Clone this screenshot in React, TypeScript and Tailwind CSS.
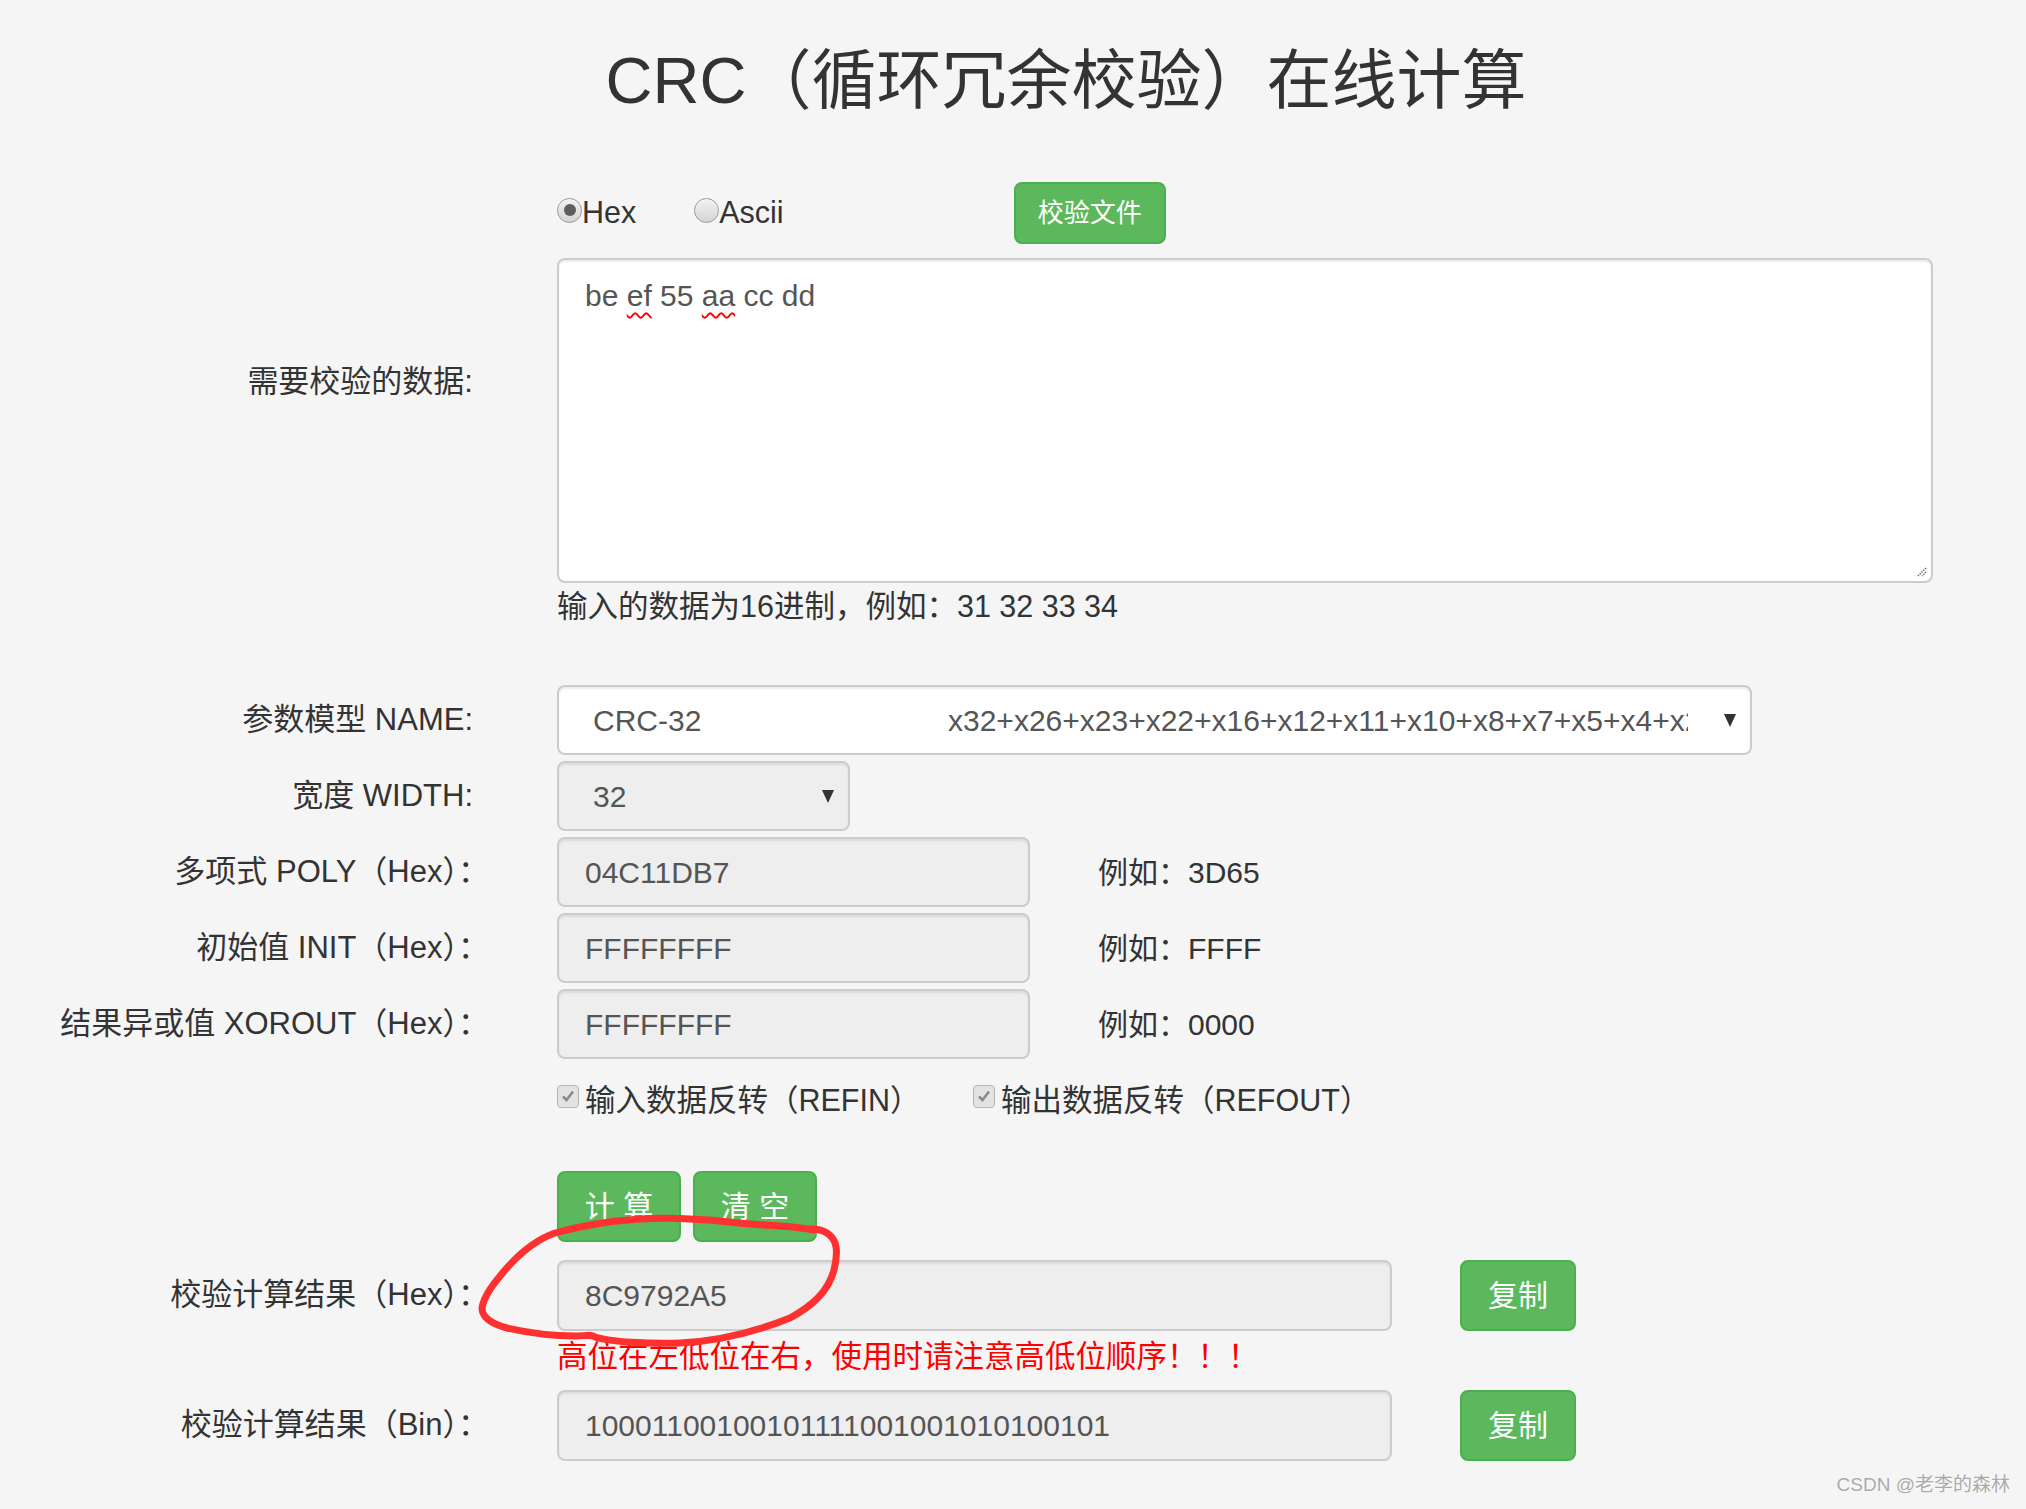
import type { ReactNode } from "react";

const font = "font-['Liberation_Sans','Noto_Sans_CJK_SC',sans-serif]";
const field =
  "flex items-center h-[70px] border-2 border-[#ccc] rounded-[8px] shadow-[inset_0_2px_2px_rgba(0,0,0,0.075)] text-[30px] text-[#555]";
const greenBtn =
  "flex items-center justify-center bg-[#5cb85c] border-2 border-[#4cae4c] rounded-[8px] text-white";

function Row({ label, children, className = "", half }: { label: ReactNode; children: ReactNode; className?: string; half?: boolean }) {
  return (
    <div className={"flex items-center " + className}>
      <div className={"w-[489px] shrink-0 text-right text-[31px] text-[#333] whitespace-nowrap " + (half ? "pr-[16px]" : "")}>{label}</div>
      <div className="ml-[68px] flex items-center">{children}</div>
    </div>
  );
}

function Radio({ checked }: { checked?: boolean }) {
  return (
    <span className="mb-[6px] flex h-[25px] w-[25px] items-center justify-center rounded-full border border-[#9a9a9a] bg-gradient-to-b from-[#f2f2f2] to-[#d4d4d4] shadow-[inset_0_1px_1px_rgba(255,255,255,0.8)]">
      {checked && <span className="h-[12px] w-[12px] rounded-full bg-[#5e5e5e]" />}
    </span>
  );
}

function Check() {
  return (
    <span className="mb-[10px] flex h-[23px] w-[22px] items-center justify-center rounded-[4px] border border-[#b5b5b5] bg-[#e3e3e3]">
      <svg width="14" height="14" viewBox="0 0 14 14">
        <path d="M2 7.5 L5.5 11 L12 2.5" fill="none" stroke="#8a8a8a" strokeWidth="2.6" />
      </svg>
    </span>
  );
}

function Arrow() {
  return (
    <svg width="12" height="13" viewBox="0 0 12 13">
      <path d="M0 0 H12 L6 13 Z" fill="#333" />
    </svg>
  );
}

export default function App() {
  return (
    <div className={"relative min-h-[1509px] bg-[#f5f5f5] " + font}>
      <div className="flex h-[162px] items-center justify-center pl-[106px] text-[65px] text-[#333]">
        CRC（循环冗余校验）在线计算
      </div>

      <Row label="" className="mt-[20px] h-[62px]">
        <Radio checked />
        <span className="text-[30.5px] text-[#333]">Hex</span>
        <span className="ml-[58px]"><Radio /></span>
        <span className="text-[30.5px] text-[#333]">Ascii</span>
        <button className={greenBtn + " ml-[230px] h-[62px] px-[22px] text-[26px]"}>校验文件</button>
      </Row>

      <div className="mt-[14px] flex items-start">
        <div className="mt-[102px] w-[489px] shrink-0 pr-[16px] text-right text-[31px] leading-[43px] text-[#333]">需要校验的数据:</div>
        <div className="ml-[68px]">
          <div className="relative h-[325px] w-[1376px] rounded-[8px] border-2 border-[#ccc] bg-white px-[26px] pt-[14px] text-[30px] leading-[43px] text-[#555] shadow-[inset_0_2px_2px_rgba(0,0,0,0.075)]">
            be{" "}
            <span className="underline decoration-[#f00] decoration-wavy decoration-2 underline-offset-[6px]">ef</span> 55{" "}
            <span className="underline decoration-[#f00] decoration-wavy decoration-2 underline-offset-[6px]">aa</span> cc dd
            <svg className="absolute bottom-[4px] right-[4px]" width="12" height="12" viewBox="0 0 12 12">
              <path d="M11 3 L3 11 M11 7 L7 11" stroke="#666" strokeWidth="1.4" strokeDasharray="1.5 1" />
            </svg>
          </div>
          <div className="flex h-[48px] items-center text-[30.5px] text-[#333]">输入的数据为16进制，例如：31 32 33 34</div>
        </div>
      </div>

      <div className="mt-[54px] flex flex-col gap-[6px]">
        <Row label="参数模型 NAME:" half className="h-[70px]">
          <div className={field + " w-[1195px] bg-white pl-[34px] pr-[14px] text-[30.8px]"}>
            <span className="w-[355px] shrink-0">CRC-32</span>
            <span className="w-[740px] shrink-0 overflow-hidden whitespace-nowrap">x32+x26+x23+x22+x16+x12+x11+x10+x8+x7+x5+x4+x2+x+1</span>
            <span className="ml-auto"><Arrow /></span>
          </div>
        </Row>
        <Row label="宽度 WIDTH:" half className="h-[70px]">
          <div className={field + " w-[293px] bg-[#eee] pl-[34px] pr-[14px]"}>
            <span>32</span>
            <span className="ml-auto"><Arrow /></span>
          </div>
        </Row>
        {[
          ["多项式 POLY（Hex）：", "04C11DB7", "3D65"],
          ["初始值 INIT（Hex）：", "FFFFFFFF", "FFFF"],
          ["结果异或值 XOROUT（Hex）：", "FFFFFFFF", "0000"],
        ].map(([l, v, e]) => (
          <Row key={l} label={l} className="h-[70px]">
            <div className={field + " w-[473px] bg-[#eee] pl-[26px]"}>{v}</div>
            <span className="ml-[68px] text-[30px] text-[#333]">例如：{e}</span>
          </Row>
        ))}
      </div>

      <Row label="" className="h-[84px]">
        <div className="flex w-[416px] items-center">
          <Check />
          <span className="ml-[6px] text-[30.5px] text-[#333]">输入数据反转（REFIN）</span>
        </div>
        <Check />
        <span className="ml-[6px] text-[30.5px] text-[#333]">输出数据反转（REFOUT）</span>
      </Row>

      <Row label="" className="mt-[28px] h-[71px]">
        <button className={greenBtn + " h-[71px] w-[124px] text-[30px]"}>计 算</button>
        <button className={greenBtn + " ml-[12px] h-[71px] w-[124px] text-[30px]"}>清 空</button>
      </Row>

      <Row label="校验计算结果（Hex）：" className="mt-[18px] h-[71px]">
        <div className={field + " h-[71px] w-[835px] bg-[#eee] pl-[26px]"}>8C9792A5</div>
        <button className={greenBtn + " ml-[68px] h-[71px] w-[116px] text-[30px]"}>复制</button>
      </Row>
      <Row label="" className="h-[52px]">
        <span className="text-[30.5px] text-[#f00]">高位在左低位在右，使用时请注意高低位顺序！！！</span>
      </Row>
      <Row label="校验计算结果（Bin）：" className="mt-[7px] h-[71px]">
        <div className={field + " h-[71px] w-[835px] bg-[#eee] pl-[26px]"}>10001100100101111001001010100101</div>
        <button className={greenBtn + " ml-[68px] h-[71px] w-[116px] text-[30px]"}>复制</button>
      </Row>

      <svg className="pointer-events-none absolute left-0 top-0" width="2026" height="1509">
        <path
          d="M813 1230 C790 1225 760 1226 730 1222 C700 1219 670 1217 640 1219 C610 1221 580 1226 555 1233 C535 1240 518 1255 505 1270 C495 1282 484 1295 482 1308 C482 1318 492 1324 507 1328 C525 1332 550 1336 575 1336 C585 1336 592 1334 595 1337 C610 1342 650 1344 680 1343 C720 1341 760 1330 790 1318 C812 1306 828 1292 834 1270 C838 1252 838 1240 827 1233 C822 1230 818 1229 812 1229"
          fill="none"
          stroke="#ff3030"
          strokeWidth="7"
          strokeLinecap="round"
          strokeLinejoin="round"
        />
      </svg>

      <div className="absolute bottom-[10px] right-[16px] text-[19px] text-[#aaa] [text-shadow:0_0_2px_#fff]">CSDN @老李的森林</div>
    </div>
  );
}
